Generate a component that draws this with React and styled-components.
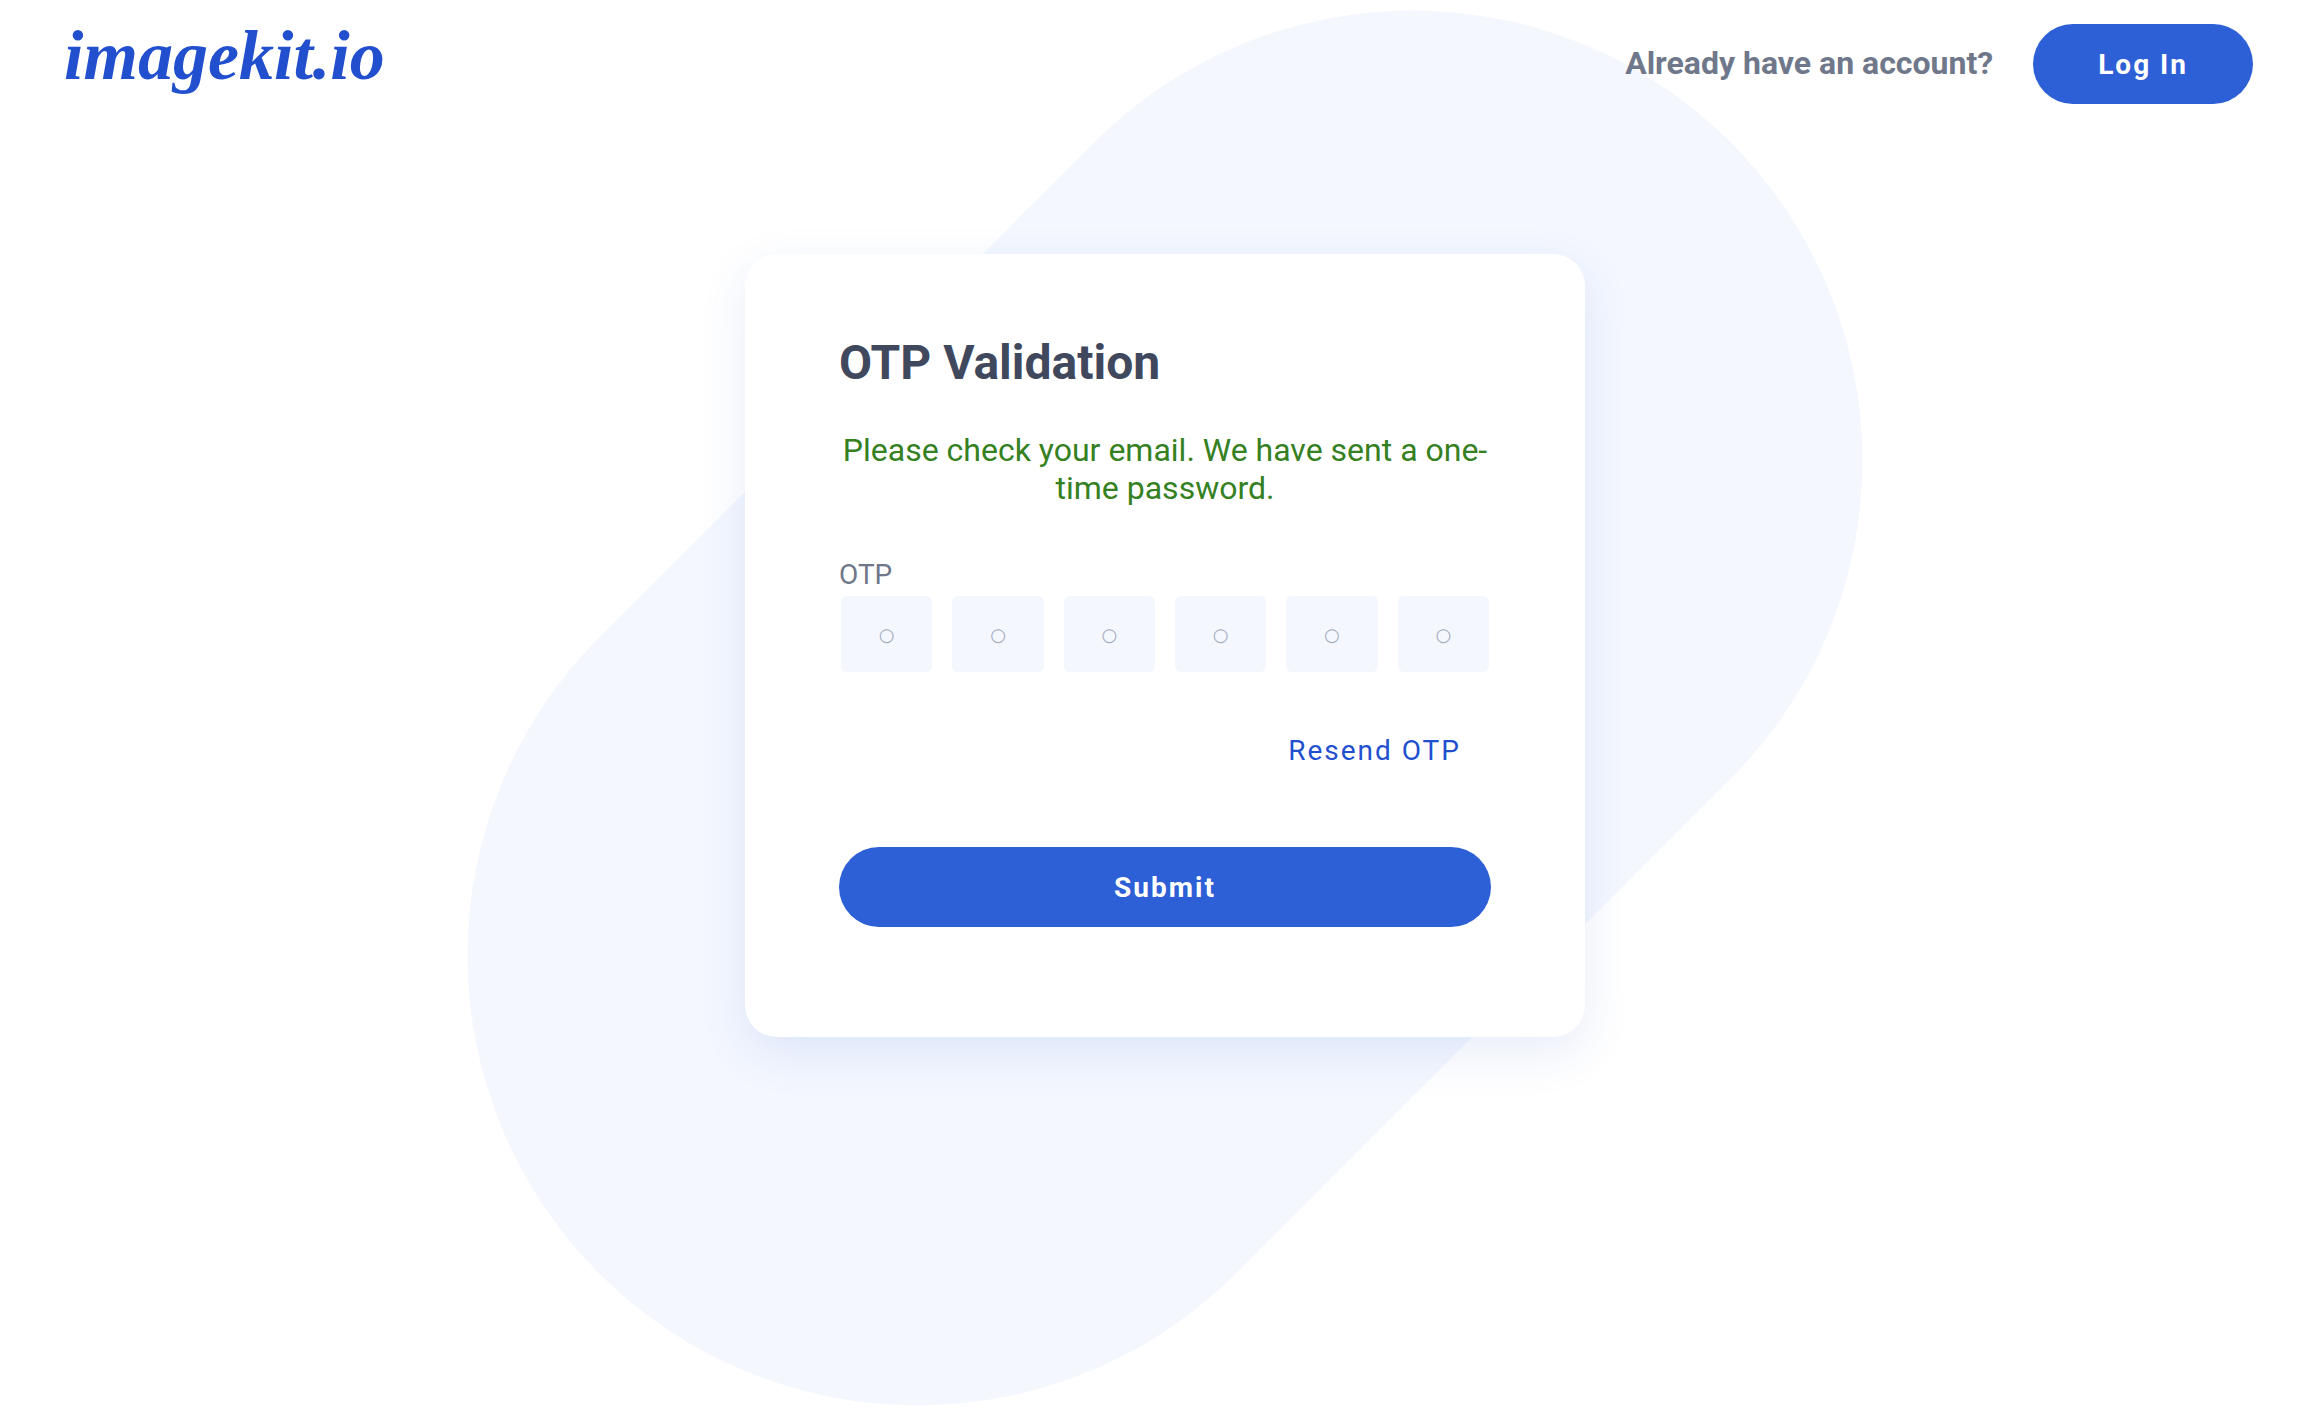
import React, { useState } from 'react';
import styled, { createGlobalStyle } from 'styled-components';

const GlobalStyle = createGlobalStyle`
  *, *::before, *::after { box-sizing: border-box; }
  body {
    margin: 0;
    background: #ffffff;
    color: #40485e;
    font-family: Roboto, "Liberation Sans", sans-serif;
  }
`;

const Page = styled.div`
  position: relative;
  display: flex;
  flex-direction: column;
  min-height: 100vh;
  overflow: hidden;
`;

const Backdrop = styled.div`
  position: absolute;
  inset: 0 0 0 18px;
  z-index: -1;
  display: flex;
  align-items: center;
  justify-content: center;
`;

const Pill = styled.div`
  flex: none;
  width: 1600px;
  height: 900px;
  border-radius: 450px;
  background: #f4f7fe;
  transform: rotate(-45deg);
`;

const Header = styled.header`
  display: flex;
  align-items: flex-start;
  justify-content: space-between;
  padding: 24px 59px 0 64px;
`;

const Logo = styled.a`
  color: #224fce;
  font-family: "Liberation Serif", "Times New Roman", serif;
  font-size: 70px;
  font-style: italic;
  font-weight: 700;
  line-height: 64px;
  text-decoration: none;
`;

const Account = styled.div`
  display: flex;
  align-items: baseline;
  gap: 40px;
  color: #6f788a;
  font-size: 32px;
  font-weight: 700;
`;

const PrimaryButton = styled.button`
  width: ${({ $block }) => ($block ? '100%' : 'auto')};
  height: 80px;
  padding: 0 65px;
  border: 0;
  border-radius: 40px;
  background: #2d5fd6;
  color: #ffffff;
  font: 700 28px Roboto, "Liberation Sans", sans-serif;
  letter-spacing: 2px;
  cursor: pointer;
`;

const Main = styled.main`
  display: flex;
  justify-content: center;
  padding: 150px 0 100px 18px;
`;

const Card = styled.form`
  width: 840px;
  padding: 81px 94px 110px;
  border-radius: 32px;
  background: #ffffff;
  box-shadow: 0 16px 48px rgba(45, 95, 214, 0.11);
`;

const Title = styled.h1`
  margin: 0;
  font-size: 48px;
  font-weight: 700;
  line-height: 56px;
`;

const Message = styled.p`
  margin: 40px 0 46px;
  color: #35801f;
  font-size: 32px;
  line-height: 38px;
  text-align: center;
`;

const CodeGroup = styled.fieldset`
  min-width: 0;
  margin: 0;
  padding: 0;
  border: 0;
`;

const CodeLabel = styled.legend`
  padding: 0;
  color: #6f788a;
  font-size: 28px;
  line-height: 43px;
`;

const CodeRow = styled.div`
  display: flex;
  gap: 20px;
  padding: 0 2px;
`;

const Digit = styled.input`
  flex: 1;
  min-width: 0;
  height: 76px;
  padding: 0;
  border: 0;
  border-radius: 6px;
  background: #f4f7fe;
  color: #40485e;
  font-family: "DejaVu Sans", sans-serif;
  font-size: 18px;
  text-align: center;

  &::placeholder {
    color: #a0aabb;
    opacity: 1;
  }
`;

const Actions = styled.div`
  display: flex;
  justify-content: flex-end;
  padding: 38px 0 57px;
`;

const ResendButton = styled.button`
  height: 80px;
  padding: 0 30px;
  border: 0;
  background: transparent;
  color: #224fce;
  font: 400 28px Roboto, "Liberation Sans", sans-serif;
  letter-spacing: 2px;
  cursor: pointer;
`;

const LENGTH = 6;

export default function App() {
  const [digits, setDigits] = useState(Array(LENGTH).fill(''));

  const update = (index, value) =>
    setDigits((current) => current.map((digit, i) => (i === index ? value : digit)));

  return (
    <>
      <GlobalStyle />
      <Page>
        <Backdrop aria-hidden="true">
          <Pill />
        </Backdrop>
        <Header>
          <Logo href="#">imagekit.io</Logo>
          <Account>
            <span>Already have an account?</span>
            <PrimaryButton type="button">Log In</PrimaryButton>
          </Account>
        </Header>
        <Main>
          <Card onSubmit={(event) => event.preventDefault()}>
            <Title>OTP Validation</Title>
            <Message>Please check your email. We have sent a one-time password.</Message>
            <CodeGroup>
              <CodeLabel>OTP</CodeLabel>
              <CodeRow>
                {digits.map((digit, index) => (
                  <Digit
                    key={index}
                    aria-label={`Digit ${index + 1}`}
                    inputMode="numeric"
                    maxLength={1}
                    placeholder="○"
                    value={digit}
                    onChange={(event) => update(index, event.target.value)}
                  />
                ))}
              </CodeRow>
            </CodeGroup>
            <Actions>
              <ResendButton type="button">Resend OTP</ResendButton>
            </Actions>
            <PrimaryButton type="submit" $block>
              Submit
            </PrimaryButton>
          </Card>
        </Main>
      </Page>
    </>
  );
}
